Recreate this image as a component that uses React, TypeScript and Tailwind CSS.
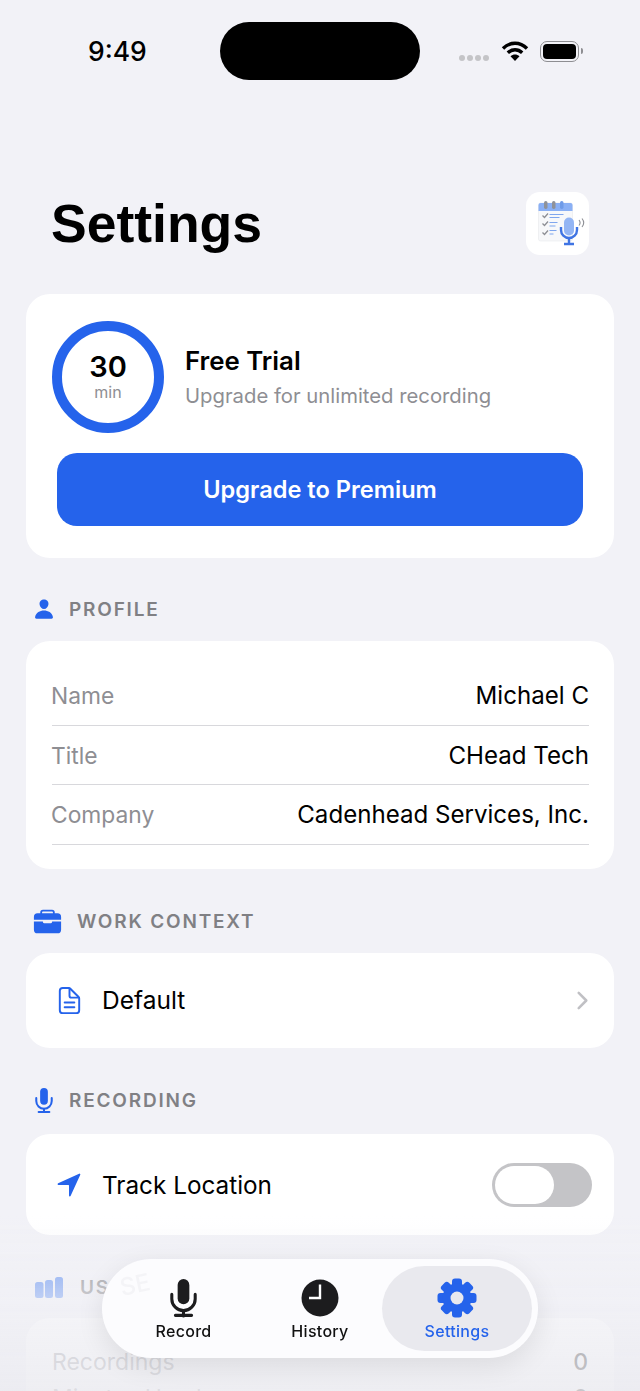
import { IoBriefcase, IoChevronForward, IoDocumentTextOutline, IoNavigate, IoPerson } from 'react-icons/io5';
import type { ReactNode } from 'react';

const profileRows = [
  { label: 'Name', value: 'Michael C' },
  { label: 'Title', value: 'CHead Tech' },
  { label: 'Company', value: 'Cadenhead Services, Inc.' },
];

const gearAngles = [0, 45, 90, 135, 180, 225, 270, 315];

function SectionHeader({ icon, label, spacing }: { icon: ReactNode; label: string; spacing: string }) {
  return (
    <div className={`flex h-[32px] items-center ${spacing}`}>
      <span className="flex items-center text-[#2563eb]">{icon}</span>
      <span className="text-[19px] font-semibold leading-none tracking-[1.8px] text-[#808084]">{label}</span>
    </div>
  );
}

// filled mic, used in the section header and the tab bar
function MicIcon({ width, height, color }: { width: number; height: number; color: string }) {
  return (
    <svg width={width} height={height} viewBox="0 0 30 42" fill="none" stroke={color} strokeWidth="3.4">
      <rect x="8.500" y="0" width="13" height="28" rx="6.500" fill={color} stroke="none" />
      <path d="M2 17v5a13 13 0 0 0 26 0v-5" strokeLinecap="round" />
      <path d="M15 35v6M6 40.300h18" strokeLinecap="round" />
    </svg>
  );
}

function UsageIcon() {
  return (
    <svg width="28" height="21" viewBox="0 0 28 21" fill="#5f8ff2">
      <rect x="0" y="5" width="8.500" height="16" rx="2.500" />
      <rect x="10" y="3" width="8" height="18" rx="2.500" />
      <rect x="20" y="0" width="8" height="21" rx="2.500" />
    </svg>
  );
}

function GearIcon() {
  return (
    <svg width="40" height="40" viewBox="0 0 40 40">
      {gearAngles.map((a) => (
        <rect key={a} x="15" y="0.500" width="10" height="12" rx="3" fill="#2563eb" transform={`rotate(${a} 20 20)`} />
      ))}
      <circle cx="20" cy="20" r="14.500" fill="#2563eb" />
      <circle cx="20" cy="20" r="6.500" fill="#e9e9ee" />
    </svg>
  );
}

function AppLogo() {
  return (
    <div className="flex h-[63px] w-[63px] items-center justify-center rounded-[14px] bg-white">
      <svg width="48" height="48" viewBox="0 0 48 48" className="overflow-visible blur-[0.3px]">
        <rect x="4.500" y="3" width="34" height="38" rx="2" fill="#f7f8fa" stroke="#e8e9ed" strokeWidth="0.6" />
        <path d="M4.500 11V5a2 2 0 0 1 2-2h30a2 2 0 0 1 2 2v6z" fill="#8ab0f5" />
        <rect x="10" y="1" width="3.500" height="8" rx="1.700" fill="#8f9299" />
        <rect x="18" y="1" width="3.500" height="8" rx="1.700" fill="#8f9299" />
        <rect x="26" y="1" width="3.500" height="8" rx="1.700" fill="#6f9be8" />
        <path d="M8.500 15.500l2 2 3.500-4M8.500 23.500l2 2 3.500-4M8.500 32.500l2 2 3.500-4" fill="none" stroke="#8d8f95" strokeWidth="1.3" />
        <path d="M15.500 14.500h14M15.500 17.500h10" stroke="#7fa6ee" strokeWidth="1.2" />
        <path d="M15.500 22.500h8M15.500 26h6M15.500 30.500h7M15.500 34h4" stroke="#7fa6ee" strokeWidth="1.200" />
        <rect x="30" y="17.500" width="10" height="18" rx="5" fill="#93b5f4" />
        <path d="M27 27v3a8 8 0 0 0 16 0v-3" fill="none" stroke="#3f74e3" strokeWidth="2.400" />
        <path d="M35 38v5M30 44h10" stroke="#3f74e3" strokeWidth="2.400" />
        <path d="M45 20c1.200 1.500 1.200 4 0 5.500M48 18.500c2 2.500 2 6 0 8.500" fill="none" stroke="#8d8f95" strokeWidth="1.100" />
      </svg>
    </div>
  );
}

function StatusBar() {
  return (
    <div className="relative flex h-[80px] items-start">
      <span className="ml-[88px] mt-[35px] text-[26.500px] font-medium leading-[32px] text-black">9:49</span>
      <div className="absolute left-[220px] top-[22px] h-[58px] w-[200px] rounded-full bg-black" />
      <div className="absolute left-[459px] top-[55px] flex gap-[2px]">
        <span className="h-[6px] w-[6px] rounded-full bg-[#c4c4c7]" />
        <span className="h-[6px] w-[6px] rounded-full bg-[#c4c4c7]" />
        <span className="h-[6px] w-[6px] rounded-full bg-[#c4c4c7]" />
        <span className="h-[6px] w-[6px] rounded-full bg-[#c4c4c7]" />
      </div>
      <svg className="absolute left-[501px] top-[40px]" width="28" height="22" viewBox="0 0 28 22">
        <path d="M2 8.500C9 1.500 19 1.500 26 8.500" fill="none" stroke="#000" strokeWidth="3.400" />
        <path d="M6.800 12.800C11 8.800 17 8.800 21.200 12.800" fill="none" stroke="#000" strokeWidth="3.400" />
        <path d="M9.500 16.200c2.800-2.400 6.200-2.400 9 0L14 21z" fill="#000" />
      </svg>
      <div className="absolute left-[540px] top-[41px] flex h-[21px] w-[39px] items-center justify-center rounded-[7px] border-[1.500px] border-[#8e8e92]">
        <div className="h-[15px] w-[33px] rounded-[4px] bg-black" />
      </div>
      <div className="absolute left-[581px] top-[48px] h-[6px] w-[2px] rounded-r-full bg-[#8e8e92]" />
    </div>
  );
}

function TabBar() {
  return (
    <div className="absolute bottom-[33px] left-[102px] flex h-[99px] w-[436px] items-center rounded-full bg-[#fcfcfe] pl-[12px] pr-[6px] shadow-[0_8px_28px_rgba(0,0,0,0.09)]">
      {/* label seen through the glass bar */}
      <span aria-hidden className="absolute left-[18px] top-[8px] rotate-[-12deg] text-[24px] font-medium text-[#f4f4f7]">SE</span>
      <div className="relative flex h-[85px] w-[139px] flex-col items-center justify-center">
        <div className="mb-[1px] flex h-[44px] items-center"><MicIcon width={27} height={40} color="#1c1c1e" /></div>
        <span className="text-[16px] font-medium leading-[20px] tracking-[0.3px] text-[#111]">Record</span>
      </div>
      <div className="ml-[5px] flex h-[85px] w-[124px] flex-col items-center justify-center">
        <svg width="44" height="44" viewBox="0 0 44 44" className="mb-[1px]">
          <circle cx="22" cy="22" r="18.500" fill="#1c1c1e" />
          <path d="M22 8.500V22H11" fill="none" stroke="#fff" strokeWidth="2.400" />
        </svg>
        <span className="text-[16px] font-medium leading-[20px] tracking-[0.3px] text-[#111]">History</span>
      </div>
      <div className="flex h-[85px] w-[150px] flex-col items-center justify-center rounded-full bg-[#e9e9ee]">
        <div className="mb-[1px] flex h-[44px] items-center"><GearIcon /></div>
        <span className="text-[16px] font-medium leading-[20px] tracking-[0.3px] text-[#2563eb]">Settings</span>
      </div>
    </div>
  );
}

export default function App() {
  return (
    <div className="relative h-[1391px] w-[640px] overflow-hidden bg-[#f2f2f7] font-['Inter',sans-serif]">
      <StatusBar />
      <div className="flex h-[214px] items-start justify-between pl-[51px] pr-[51px] pt-[112px]">
        <h1 className="font-['Liberation_Sans',sans-serif] text-[53.500px] font-bold leading-[64px] text-black">Settings</h1>
        <AppLogo />
      </div>

      <div className="flex flex-col px-[26px]">
        {/* plan card */}
        <div className="h-[264px] rounded-[24px] bg-white px-[26px] pt-[27px]">
          <div className="flex items-center gap-[21px]">
            <div className="flex h-[112px] w-[112px] flex-col items-center justify-center rounded-full border-[10px] border-[#2563eb]">
              <span className="text-[29px] font-semibold leading-[30px] text-black">30</span>
              <span className="text-[16px] leading-[20px] text-[#8e8e93]">min</span>
            </div>
            <div className="flex flex-col gap-[5px]">
              <span className="text-[25.800px] font-semibold leading-[32px] text-black">Free Trial</span>
              <span className="text-[20.300px] leading-[28px] text-[#8e8e93]">Upgrade for unlimited recording</span>
            </div>
          </div>
          <div className="mx-[5px] mt-[20px] flex h-[73px] items-center justify-center rounded-[20px] bg-[#2563eb] text-[23.600px] font-semibold text-white">
            Upgrade to Premium
          </div>
        </div>

        <div className="pt-[35px]">
          <SectionHeader icon={<IoPerson size={22} />} label="PROFILE" spacing="pl-[7px] gap-[14px]" />
        </div>
        <div className="mt-[16px] h-[228px] rounded-[24px] bg-white pl-[26px] pr-[25px] pt-[25px]">
          {profileRows.map((row) => (
            <div key={row.label} className="flex h-[59.500px] items-center justify-between border-b border-[#d8d8dc] pt-[2px]">
              <span className="-ml-[1px] text-[22.800px] text-[#8e8e93]">{row.label}</span>
              <span className="text-[24.100px] text-black">{row.value}</span>
            </div>
          ))}
        </div>

        <div className="pt-[36px]">
          <SectionHeader icon={<IoBriefcase size={29} />} label="WORK CONTEXT" spacing="pl-[7px] gap-[15px]" />
        </div>
        <div className="mt-[16px] flex h-[95px] items-center rounded-[24px] bg-white pl-[28px] pr-[18px]">
          <IoDocumentTextOutline size={31} className="text-[#2563eb]" />
          <span className="ml-[17px] flex-1 text-[24.500px] text-black">Default</span>
          <IoChevronForward size={27} className="text-[#c0c0c4]" />
        </div>

        <div className="pt-[36px]">
          <SectionHeader icon={<MicIcon width={18} height={25} color="#2563eb" />} label="RECORDING" spacing="pl-[9px] gap-[16px]" />
        </div>
        <div className="mt-[18px] flex h-[101px] items-center rounded-[24px] bg-white pl-[29px] pr-[22px]">
          <IoNavigate size={28} className="text-[#2563eb]" />
          <span className="ml-[19px] flex-1 pt-[1px] text-[24.300px] text-black">Track Location</span>
          <div className="flex h-[44px] w-[100px] items-center rounded-full bg-[#c4c4c7] p-[3px]">
            <div className="h-[38px] w-[59px] rounded-full bg-white" />
          </div>
        </div>

        <div className="pt-[36px]">
          <SectionHeader icon={<UsageIcon />} label="USAGE" spacing="pl-[9px] gap-[17px]" />
        </div>
        <div className="mt-[15px] h-[200px] rounded-[24px] bg-white px-[26px] pt-[26px]">
          <div className="flex h-[36px] items-center justify-between text-[23px] text-[#8e8e93]">
            <span>Recordings</span>
            <span className="font-medium text-black">0</span>
          </div>
          <div className="flex h-[36px] items-center justify-between text-[23px] text-[#8e8e93]">
            <span>Minutes Used</span>
            <span className="font-medium text-black">0</span>
          </div>
        </div>
      </div>

      {/* fade behind the floating tab bar */}
      <div className="absolute bottom-0 left-0 h-[175px] w-full bg-gradient-to-b from-[#f2f2f7]/0 via-[#f0f0f5]/70 to-[#ebebf0]/85 backdrop-blur-[0.5px]" />
      <TabBar />
    </div>
  );
}
